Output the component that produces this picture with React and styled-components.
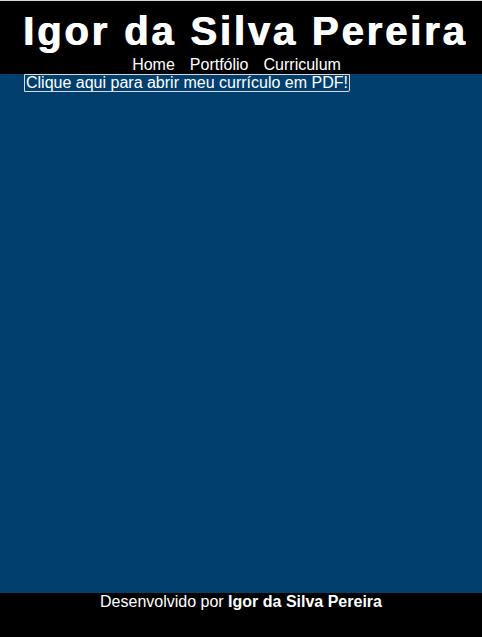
import React from "react";
import styled, { createGlobalStyle } from "styled-components";

const GlobalStyle = createGlobalStyle`
  html, body {
    margin: 0;
    padding: 0;
    height: 100%;
  }
  body {
    font-family: "Liberation Sans", Arial, sans-serif;
    background: #000;
    border-top: 1px solid #d4d4d4;
    box-sizing: border-box;
  }
  #root {
    height: 100%;
  }
`;

const Page = styled.div`
  display: flex;
  flex-direction: column;
  height: 100%;
`;

const Header = styled.header`
  background: #000;
  color: #fff;
  padding: 7px 0 0;
  text-align: center;
`;

const Title = styled.h1`
  margin: 0;
  font-size: 40px;
  line-height: 46px;
  font-weight: 900;
  letter-spacing: 2.85px;
  padding-left: 8px;
  text-shadow: 1px 0 0 #fff;
`;

const Nav = styled.nav`
  margin-top: 2px;
  display: flex;
  justify-content: center;
  gap: 15px;
  padding-right: 9px;
  font-size: 16px;
  line-height: 18px;
`;

const NavLink = styled.a`
  color: #fff;
  text-decoration: none;
`;

const Main = styled.main`
  flex: 1;
  background: #013f6f;
  padding: 0 24px;
`;

const PdfLink = styled.a`
  display: inline-block;
  color: #fff;
  text-decoration: none;
  font-size: 16px;
  line-height: 16px;
  padding: 0 1px;
  border: 1px solid #d8d8d8;
  border-radius: 0 0 2px 0;
`;

const Footer = styled.footer`
  height: 44px;
  background: #000;
  color: #fff;
  text-align: center;
  font-size: 16px;
  line-height: 18px;
`;

export default function App() {
  return (
    <>
      <GlobalStyle />
      <Page>
        <Header>
          <Title>Igor da Silva Pereira</Title>
          <Nav>
            <NavLink href="#">Home</NavLink>
            <NavLink href="#">Portfólio</NavLink>
            <NavLink href="#">Curriculum</NavLink>
          </Nav>
        </Header>
        <Main>
          <PdfLink href="#">Clique aqui para abrir meu currículo em PDF!</PdfLink>
        </Main>
        <Footer>
          Desenvolvido por <b>Igor da Silva Pereira</b>
        </Footer>
      </Page>
    </>
  );
}
